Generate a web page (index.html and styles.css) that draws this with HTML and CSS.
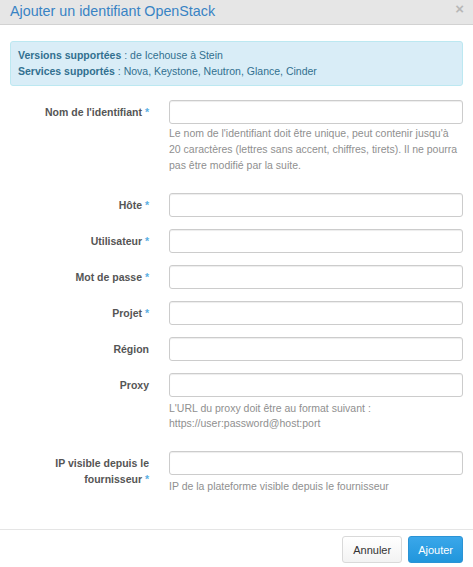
FILE: index.html
```html
<!DOCTYPE html>
<html lang="fr">
<head>
<meta charset="utf-8">
<title>Ajouter un identifiant OpenStack</title>
<link rel="stylesheet" href="styles.css">
</head>
<body>
<div class="modal">
  <div class="modal-header">
    <h4 class="modal-title">Ajouter un identifiant OpenStack</h4>
    <span class="close">×</span>
  </div>
  <div class="modal-body">
    <div class="alert">
      <div><b>Versions supportées</b> : de Icehouse à Stein</div>
      <div><b>Services supportés</b> : Nova, Keystone, Neutron, Glance, Cinder</div>
    </div>
    <form class="form">
      <div class="form-group">
        <label class="label">Nom de l'identifiant <span class="req">*</span></label>
        <div class="field">
          <input class="input" type="text">
          <p class="help">Le nom de l'identifiant doit être unique, peut contenir jusqu'à 20 caractères (lettres sans accent, chiffres, tirets). Il ne pourra pas être modifié par la suite.</p>
        </div>
      </div>
      <div class="form-group">
        <label class="label">Hôte <span class="req">*</span></label>
        <div class="field"><input class="input" type="text"></div>
      </div>
      <div class="form-group">
        <label class="label">Utilisateur <span class="req">*</span></label>
        <div class="field"><input class="input" type="text"></div>
      </div>
      <div class="form-group">
        <label class="label">Mot de passe <span class="req">*</span></label>
        <div class="field"><input class="input" type="password"></div>
      </div>
      <div class="form-group">
        <label class="label">Projet <span class="req">*</span></label>
        <div class="field"><input class="input" type="text"></div>
      </div>
      <div class="form-group">
        <label class="label">Région</label>
        <div class="field"><input class="input" type="text"></div>
      </div>
      <div class="form-group">
        <label class="label">Proxy</label>
        <div class="field">
          <input class="input" type="text">
          <p class="help help-proxy">L'URL du proxy doit être au format suivant : https://user:password@host:port</p>
        </div>
      </div>
      <div class="form-group last">
        <label class="label">IP visible depuis le fournisseur <span class="req">*</span></label>
        <div class="field">
          <input class="input" type="text">
          <p class="help help-last">IP de la plateforme visible depuis le fournisseur</p>
        </div>
      </div>
    </form>
  </div>
  <div class="modal-footer">
    <button class="btn btn-default" type="button">Annuler</button>
    <button class="btn btn-primary" type="button">Ajouter</button>
  </div>
</div>
</body>
</html>
```
FILE: styles.css
```css
* { box-sizing: border-box; }
html, body { margin: 0; padding: 0; background: #fff; }
body {
  font-family: "Liberation Sans", Arial, sans-serif;
  font-size: 10.5px;
  line-height: 15.7px;
  color: #555;
}
.modal { width: 473px; }
.modal-header {
  position: relative;
  height: 25px;
  background: #e6e6e6;
  border-bottom: 1px solid #d2d2d2;
  padding: 0 10px;
}
.modal-title {
  margin: 0;
  font-size: 14.3px;
  font-weight: normal;
  line-height: 22px;
  color: #3883c4;
}
.close {
  position: absolute;
  right: 9px;
  top: 0;
  font-size: 15px;
  font-weight: bold;
  line-height: 18px;
  color: #000;
  opacity: 0.2;
}
.modal-body { padding: 16px 10px 0; }
.alert {
  background: #d9edf7;
  border: 1px solid #bce8f1;
  border-radius: 3px;
  color: #31708f;
  padding: 6px 7px;
  margin-bottom: 14px;
}
.alert b { font-weight: bold; }
.form { margin: 0; }
.form-group {
  display: grid;
  grid-template-columns: 124px 294px;
  column-gap: 20px;
  margin-left: 15px;
  margin-bottom: 12px;
}
.form-group.last { margin-bottom: 0; }
.label {
  text-align: right;
  font-weight: bold;
  color: #555;
  padding-top: 4px;
  line-height: 16px;
}
.req { color: #5aafe3; font-weight: bold; }
.input {
  display: block;
  width: 294px;
  height: 24px;
  margin: 0;
  padding: 3px 6px;
  border: 1px solid #cccccc;
  border-radius: 3px;
  box-shadow: inset 0 1px 1px rgba(0,0,0,0.075);
  font: inherit;
  background: #fff;
}
.help {
  margin: 2px 0 7px;
  color: #8f8f8f;
}
.help.help-proxy {
  margin: 4px 0 7px;
}
.help.help-last {
  margin: 4px 0 0;
  padding-bottom: 34px;
}
.modal-footer {
  border-top: 1px solid #e5e5e5;
  padding: 6px 10px 4px;
  display: flex;
  justify-content: flex-end;
  gap: 6px;
}
.btn {
  font-family: "Liberation Sans", Arial, sans-serif;
  font-size: 11px;
  line-height: 16px;
  padding: 5px 10px;
  border-radius: 3px;
  height: 27px;
  cursor: pointer;
}
.btn-default {
  color: #333;
  background: linear-gradient(#ffffff, #f3f3f3);
  border: 1px solid #d9d9d9;
}
.btn-primary {
  color: #fff;
  padding: 5px 9px;
  background: linear-gradient(#3aa7ea, #2196dc);
  border: 1px solid #2a93d5;
}
```
